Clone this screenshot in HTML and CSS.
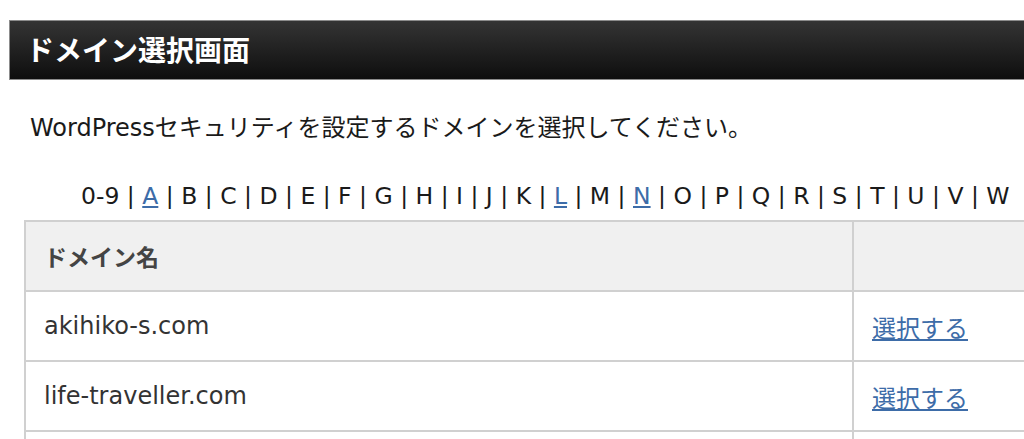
FILE: index.html
```html
<!DOCTYPE html>
<html lang="ja">
<head>
    <meta charset="UTF-8">
    <meta name="viewport" content="width=device-width, initial-scale=1.0">
    <title>ドメイン選択画面</title>
    <link rel="stylesheet" href="styles.css">
</head>
<body>
    <div class="page">
        <h2 class="page-title">ドメイン選択画面</h2>
        <p class="lead">WordPressセキュリティを設定するドメインを選択してください。</p>

        <div class="index">
            0-9 | <a href="#">A</a> | B | C | D | E | F | G | H | I | J | K | <a href="#">L</a> | M | <a href="#">N</a> | O | P | Q | R | S | T | U | V | W
        </div>

        <table class="domains">
            <tr>
                <th class="col-name">ドメイン名</th>
                <th></th>
            </tr>
            <tr>
                <td>akihiko-s.com</td>
                <td><a href="#">選択する</a></td>
            </tr>
            <tr>
                <td>life-traveller.com</td>
                <td><a href="#">選択する</a></td>
            </tr>
            <tr>
                <td>&nbsp;</td>
                <td>&nbsp;</td>
            </tr>
        </table>
    </div>
</body>
</html>
```

FILE: styles.css
```css
html, body {
    margin: 0;
    padding: 0;
    overflow: hidden;
    background-color: #ffffff;
}
body {
    font-family: "DejaVu Sans", "Noto Sans CJK JP", sans-serif;
    color: #1a1a1a;
}
.page {
    width: 1200px;
    padding-top: 20px;
}
.page-title {
    margin: 0 0 0 9px;
    height: 58px;
    padding-left: 16px;
    border: 1px solid #8c8c8c;
    border-right: none;
    background: linear-gradient(#343434, #0e0e0e);
    color: #ffffff;
    font-family: "Noto Sans CJK JP", sans-serif;
    font-size: 28px;
    font-weight: bold;
    line-height: 56px;
}
.lead {
    margin: 0;
    padding: 32px 0 0 30px;
    font-size: 24px;
    line-height: 32px;
}
.index {
    margin-top: 37px;
    padding-left: 81px;
    font-size: 23.5px;
    line-height: 30px;
    white-space: nowrap;
}
a {
    color: #3d6ca8;
}
.domains {
    margin: 9px 0 0 24px;
    width: 1160px;
    border-collapse: collapse;
    font-size: 24px;
    color: #333;
}
.domains th, .domains td {
    height: 68px;
    padding: 0 18px;
    border: 2px solid #d0d0d0;
    text-align: left;
}
.domains th {
    background-color: #f0f0f0;
    color: #444;
    font-family: "Noto Sans CJK JP", sans-serif;
    font-size: 23px;
}
.col-name {
    width: 790px;
}
```
